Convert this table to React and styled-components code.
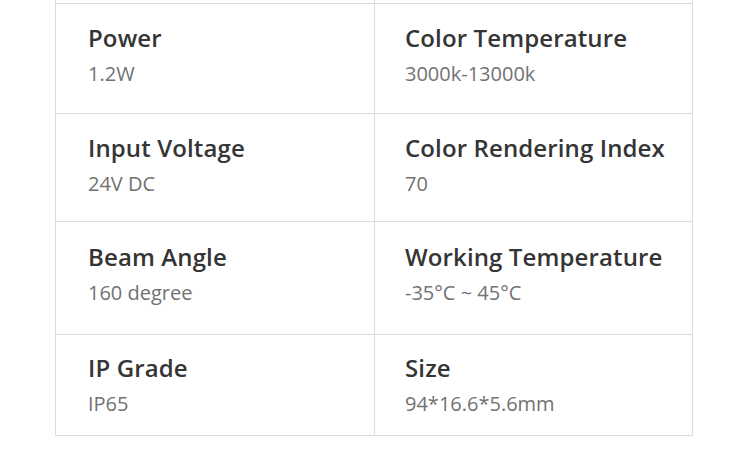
import React from "react";
import styled, { createGlobalStyle } from "styled-components";

const Global = createGlobalStyle`
  html, body { margin: 0; padding: 0; background: #fff; }
  body { font-family: "Open Sans", "Liberation Sans", sans-serif; }
`;

const Table = styled.div`
  margin-left: 55px;
  width: 638px;
  box-sizing: border-box;
  border-left: 1px solid #dcdcdc;
  border-right: 1px solid #dcdcdc;
  display: grid;
  grid-template-columns: 319px 317px;
`;

const Cell = styled.div`
  box-sizing: border-box;
  height: ${(p) => p.$h}px;
  padding: ${(p) => p.$pt}px 0 0 ${(p) => (p.$right ? 30 : 32)}px;
  border-bottom: 1px solid #dcdcdc;
  border-right: ${(p) => (p.$right ? "none" : "1px solid #dcdcdc")};
`;

const Title = styled.div`
  font-size: 24px;
  font-weight: 600;
  letter-spacing: 0.12px;
  line-height: 33px;
  color: #353535;
  white-space: nowrap;
`;

const Value = styled.div`
  margin-top: 6px;
  font-size: 20px;
  font-weight: 400;
  line-height: 27px;
  color: #727272;
  white-space: nowrap;
`;

const rows = [
  { h: 110, pt: 17, items: [["Power", "1.2W"], ["Color Temperature", "3000k-13000k"]] },
  { h: 108, pt: 17, items: [["Input Voltage", "24V DC"], ["Color Rendering Index", "70"]] },
  { h: 113, pt: 18, items: [["Beam Angle", "160 degree"], ["Working Temperature", "-35°C ~ 45°C"]] },
  { h: 101, pt: 16, items: [["IP Grade", "IP65"], ["Size", "94*16.6*5.6mm"]] },
];

export default function App() {
  return (
    <>
      <Global />
      <Table>
        <Cell $h={4} $pt={0} />
        <Cell $h={4} $pt={0} $right />
        {rows.map((r, i) =>
          r.items.map(([t, v], j) => (
            <Cell key={`${i}-${j}`} $h={r.h} $pt={r.pt} $right={j === 1}>
              <Title>{t}</Title>
              <Value>{v}</Value>
            </Cell>
          ))
        )}
      </Table>
    </>
  );
}
